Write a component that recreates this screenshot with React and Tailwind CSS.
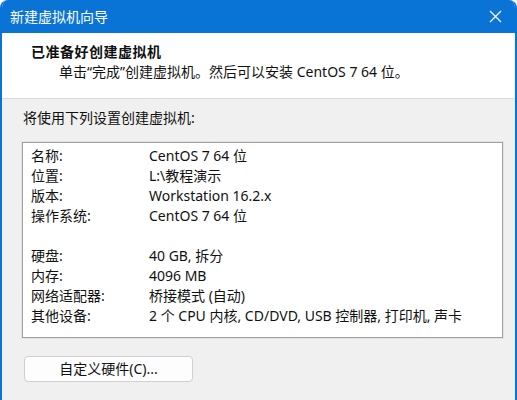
import React from 'react'

const FONT = { fontFamily: '"Noto Sans", "Noto Sans CJK SC", sans-serif' }

const rows = [
  ['名称:', 'CentOS 7 64 位'],
  ['位置:', 'L:\\教程演示'],
  ['版本:', 'Workstation 16.2.x'],
  ['操作系统:', 'CentOS 7 64 位'],
  null,
  ['硬盘:', '40 GB, 拆分'],
  ['内存:', '4096 MB'],
  ['网络适配器:', '桥接模式 (自动)'],
  ['其他设备:', '2 个 CPU 内核, CD/DVD, USB 控制器, 打印机, 声卡'],
]

export default function App() {
  return (
    <div className="h-[400px] w-[517px] overflow-hidden bg-white" style={FONT}>
      <div className="flex h-full flex-col overflow-hidden rounded-t-[8px] border-x-2 border-[#0a74d6] bg-[#f0f0f0]">
        {/* Title bar */}
        <div className="flex h-[33px] shrink-0 items-center justify-between bg-[#0a74d6] pl-[8px] pr-[13px] text-[14px] text-white">
          <span className="pb-[1px]">新建虚拟机向导</span>
          <svg width="13" height="13" viewBox="0 0 13 13" className="mb-[1px]">
            <path d="M1 1L12 12M12 1L1 12" stroke="white" strokeWidth="1.2" fill="none" />
          </svg>
        </div>

        {/* Header */}
        <div className="h-[66px] shrink-0 border-b border-[#dadada] bg-white pl-[29px] pt-[9px] text-[14px] leading-[20px] text-[#111]">
          <div className="font-bold tracking-[0.5px]">已准备好创建虚拟机</div>
          <div className="pl-[28px]">单击“完成”创建虚拟机。然后可以安装 CentOS 7 64 位。</div>
        </div>

        {/* Body */}
        <div className="flex flex-col pl-[20px] pt-[9px] text-[14px] leading-[20px] text-[#111]">
          <div className="pl-[1px]">将使用下列设置创建虚拟机:</div>
          <div className="mt-[14px] h-[196px] w-[481px] border border-[#a0a0a0] bg-white pl-[8px] pt-[3px] shadow-[0_0_0_1px_#e3e3e3]">
            {rows.map((r, i) =>
              r ? (
                <div key={i} className="flex h-[20px]">
                  <span className="w-[118px] shrink-0">{r[0]}</span>
                  <span>{r[1]}</span>
                </div>
              ) : (
                <div key={i} className="h-[20px]" />
              )
            )}
          </div>
          <button className="ml-[2px] mt-[18px] flex h-[26px] w-[169px] items-center justify-center rounded-[4px] border border-[#d0d0d0] bg-[#fdfdfd] text-[14px] text-[#111]">
            自定义硬件(C)...
          </button>
        </div>
      </div>
    </div>
  )
}
